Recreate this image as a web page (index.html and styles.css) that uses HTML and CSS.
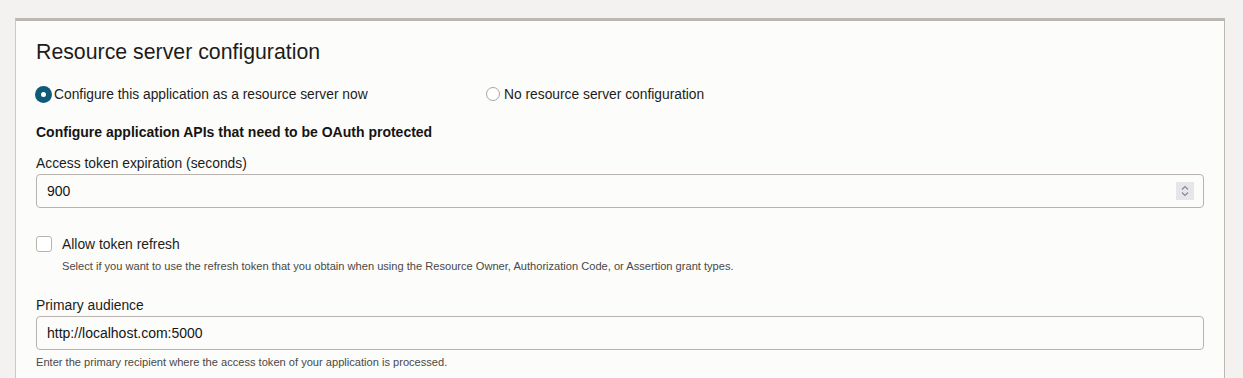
FILE: index.html
```html
<!DOCTYPE html>
<html>
<head>
<meta charset="utf-8">
<link rel="stylesheet" href="styles.css">
</head>
<body>
<div class="card">
  <h2 class="title">Resource server configuration</h2>
  <div class="radios">
    <label class="radio-opt"><span class="radio radio-on"><span class="dot"></span></span><span>Configure this application as a resource server now</span></label>
    <label class="radio-opt"><span class="radio radio-off"></span><span>No resource server configuration</span></label>
  </div>
  <div class="section-head">Configure application APIs that need to be OAuth protected</div>
  <div class="field">
    <div class="label">Access token expiration (seconds)</div>
    <div class="input">
      <span class="value">900</span>
      <span class="spinner">
        <svg width="10" height="14" viewBox="0 0 10 14"><path d="M2 5.5 L5 2.5 L8 5.5" fill="none" stroke="#8b8790" stroke-width="1.2"/><path d="M2 8.5 L5 11.5 L8 8.5" fill="none" stroke="#8b8790" stroke-width="1.2"/></svg>
      </span>
    </div>
  </div>
  <div class="check-row">
    <span class="checkbox"></span>
    <div class="check-text">
      <div class="check-label">Allow token refresh</div>
      <div class="help">Select if you want to use the refresh token that you obtain when using the Resource Owner, Authorization Code, or Assertion grant types.</div>
    </div>
  </div>
  <div class="field field2">
    <div class="label">Primary audience</div>
    <div class="input input2">
      <span class="value">http://localhost.com:5000</span>
    </div>
    <div class="help help2">Enter the primary recipient where the access token of your application is processed.</div>
  </div>
</div>
</body>
</html>
```

FILE: styles.css
```css
* { box-sizing: border-box; }
html, body { margin: 0; padding: 0; }
body {
  background: #f3f2f1;
  font-family: "Liberation Sans", Arial, sans-serif;
  color: #161513;
  height: 378px;
  overflow: hidden;
}
.card {
  margin: 18px 18px 0 15px;
  background: #fcfcfb;
  border-top: 3px solid #bdb7b1;
  border-left: 1px solid #cdc8c3;
  border-right: 1px solid #bdb7b1;
  padding: 19px 20px 0 20px;
  height: 360px;
  overflow: hidden;
}
.title {
  margin: 0;
  font-size: 21.3px;
  font-weight: normal;
  line-height: 24px;
  color: #1d1c1a;
}
.radios {
  display: grid;
  grid-template-columns: 450px auto;
  margin-top: 21px;
  height: 18px;
  align-items: center;
}
.radio-opt {
  display: flex;
  align-items: center;
  font-size: 13.8px;
  color: #1d1c1a;
}
.radio {
  display: inline-flex;
  align-items: center;
  justify-content: center;
  border-radius: 50%;
}
.radio-on {
  width: 17px;
  height: 17px;
  margin-left: -1px;
  margin-right: 2px;
  background: #0e5a78;
}
.radio-on .dot {
  width: 5px;
  height: 5px;
  border-radius: 50%;
  background: #fff;
}
.radio-off {
  width: 14px;
  height: 14px;
  border: 1px solid #a9a5a1;
  background: #fff;
  margin-right: 4px;
}
.section-head {
  margin-top: 20px;
  font-size: 14px;
  font-weight: bold;
  line-height: 18px;
}
.field { margin-top: 13px; }
.label {
  font-size: 13.85px;
  line-height: 18px;
  color: #1d1c1a;
}
.input {
  margin-top: 2px;
  height: 34px;
  border: 1px solid #b8b3ae;
  border-radius: 4px;
  background: #fcfcfb;
  display: flex;
  align-items: center;
  justify-content: space-between;
  padding: 0 9px 0 10px;
  font-size: 14px;
  color: #161513;
}
.spinner {
  width: 18px;
  height: 18px;
  background: #e6e5ea;
  display: flex;
  align-items: center;
  justify-content: center;
}
.check-row {
  display: flex;
  margin-top: 28px;
}
.checkbox {
  width: 16px;
  height: 16px;
  border: 1px solid #b8b3ae;
  border-radius: 3px;
  background: #fff;
  flex: none;
}
.check-text { margin-left: 10px; }
.check-label {
  font-size: 13.85px;
  line-height: 16px;
  color: #1d1c1a;
}
.help {
  font-size: 11.1px;
  line-height: 14px;
  color: #4a4845;
  margin-top: 7px;
}
.field2 { margin-top: 23px; }
.input2 { margin-top: 2px; }
.help2 { margin-top: 5px; }
```
